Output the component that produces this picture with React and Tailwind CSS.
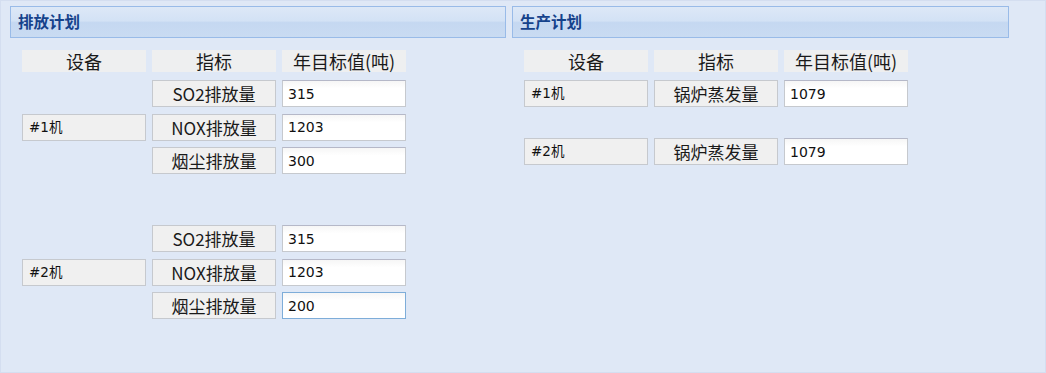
const cjk = "font-['Noto_Sans_CJK_SC','Noto_Sans',sans-serif]";
const val = "font-['DejaVu_Sans','Noto_Sans_CJK_SC',sans-serif]";

function PanelHeader({ title }) {
  return (
    <div className="h-[32px] border border-[#99bbe8] bg-[linear-gradient(to_bottom,#dde8f7_0%,#d3e2f5_46%,#c5d8f1_52%,#c9dbf2_100%)] flex items-center pl-[7px]">
      <span className={`${cjk} text-[15.5px] font-bold text-[#15428b] leading-none`}>{title}</span>
    </div>
  );
}

function ColHead({ children }) {
  return (
    <div className={`${cjk} w-[124px] h-[22px] bg-[#eeeff0] flex items-center justify-center text-[18px] text-[#1a1a1a] leading-none`}>
      {children}
    </div>
  );
}

function Label({ children }) {
  return (
    <div className={`${val} w-[124px] h-[27px] border border-[#c6c9ce] bg-[#f0f0f0] flex items-center pl-[6px] text-[13.5px] text-[#111]`}>
      {children}
    </div>
  );
}

function Btn({ children }) {
  return (
    <div className={`${cjk} w-[124px] h-[27px] border border-[#c6c9ce] bg-[#f0f0f0] flex items-center justify-center text-[17px] text-[#1a1a1a] leading-none`}>
      {children}
    </div>
  );
}

function Field({ value, focus }) {
  return (
    <input
      readOnly
      value={value}
      className={`${val} w-[124px] h-[27px] border ${focus ? "border-[#7eadd9]" : "border-[#c6c9ce] border-t-[#b5b8c8]"} bg-white bg-[linear-gradient(to_bottom,#f6f6f6_0%,#ffffff_30%)] px-[5px] text-[14px] text-[#111] outline-none`}
    />
  );
}

function EmissionGroup({ unit, rows }) {
  return (
    <div className="flex gap-[6px] items-center">
      <Label>{unit}</Label>
      <div className="flex flex-col gap-[6.5px]">
        {rows.map((r) => (
          <div key={r.name} className="flex gap-[6px]">
            <Btn>{r.name}</Btn>
            <Field value={r.value} focus={r.focus} />
          </div>
        ))}
      </div>
    </div>
  );
}

export default function App() {
  return (
    <div className="w-[1046px] h-[373px] bg-[#dfe8f6] border border-[#d4def0] flex gap-[6px] pl-[9px] pt-[5px]">
      <div className="w-[496px]">
        <PanelHeader title="排放计划" />
        <div className="pl-[12px]">
          <div className="flex gap-[6px] mt-[12px]">
            <ColHead>设备</ColHead>
            <ColHead>指标</ColHead>
            <ColHead>年目标值(吨)</ColHead>
          </div>
          <div className="mt-[8px]">
            <EmissionGroup
              unit="#1机"
              rows={[
                { name: "SO2排放量", value: "315" },
                { name: "NOX排放量", value: "1203" },
                { name: "烟尘排放量", value: "300" },
              ]}
            />
          </div>
          <div className="mt-[51px]">
            <EmissionGroup
              unit="#2机"
              rows={[
                { name: "SO2排放量", value: "315" },
                { name: "NOX排放量", value: "1203" },
                { name: "烟尘排放量", value: "200", focus: true },
              ]}
            />
          </div>
        </div>
      </div>
      <div className="w-[497px]">
        <PanelHeader title="生产计划" />
        <div className="pl-[12px]">
          <div className="flex gap-[6px] mt-[12px]">
            <ColHead>设备</ColHead>
            <ColHead>指标</ColHead>
            <ColHead>年目标值(吨)</ColHead>
          </div>
          <div className="flex gap-[6px] mt-[8px]">
            <Label>#1机</Label>
            <Btn>锅炉蒸发量</Btn>
            <Field value="1079" />
          </div>
          <div className="flex gap-[6px] mt-[31px]">
            <Label>#2机</Label>
            <Btn>锅炉蒸发量</Btn>
            <Field value="1079" />
          </div>
        </div>
      </div>
    </div>
  );
}
